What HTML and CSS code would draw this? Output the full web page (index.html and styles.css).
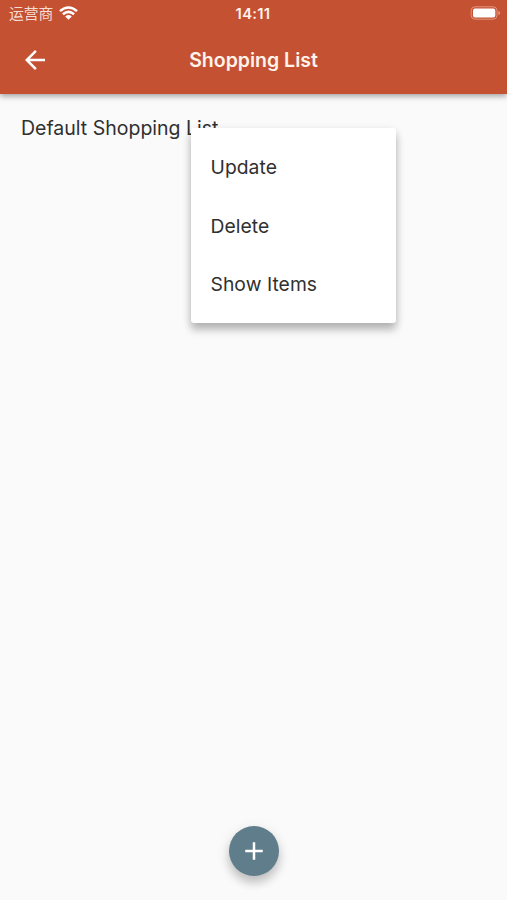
FILE: index.html
```html
<!DOCTYPE html>
<html lang="en">
<head>
<meta charset="utf-8">
<title>Shopping List</title>
<link rel="stylesheet" href="styles.css">
</head>
<body>
<div class="screen">
  <header class="header">
    <div class="status">
      <div class="carrier"><span lang="zh">运营商</span>
        <svg class="wifi" width="19" height="14" viewBox="0 0 19 14" fill="none" stroke="#fff"><path d="M1 5.1Q9.5-2.2 18 5.1M3.9 8.3Q9.5 3.5 15.1 8.3" stroke-width="2.5"/><path d="M6.2 10.4Q9.5 7.8 12.8 10.4L9.5 13.8Z" fill="#fff" stroke="none"/></svg>
      </div>
      <span class="time">14:11</span>
      <svg class="battery" width="31" height="14" viewBox="0 0 31 14"><rect x="1.2" y=".8" width="25.8" height="12.4" rx="3.8" fill="none" stroke="#e3957c"/><rect x="3" y="2.5" width="22.3" height="9" rx="2" fill="#fff"/><path d="M28.3 4.8Q30.2 5.5 30.2 7T28.3 9.2Z" fill="#e3957c"/></svg>
    </div>
    <div class="bar">
      <svg class="back" width="30" height="30" viewBox="0 0 24 24" fill="#fff"><path d="M20 11H7.83l5.59-5.59L12 4l-8 8 8 8 1.41-1.41L7.83 13H20v-2z"/></svg>
      <h1 class="title">Shopping List</h1>
    </div>
  </header>
  <main class="content">
    <div class="row">Default Shopping List</div>
  </main>
  <div class="menu">
    <div class="item">Update</div>
    <div class="item">Delete</div>
    <div class="item">Show Items</div>
  </div>
  <div class="fab"><svg width="30" height="30" viewBox="0 0 24 24" fill="#fff"><path d="M19 13h-6v6h-2v-6H5v-2h6V5h2v6h6v2z"/></svg></div>
</div>
</body>
</html>
```

FILE: styles.css
```css
body { margin: 0; font-family: Inter, sans-serif; color: #303030; }
.screen { position: relative; height: 900px; background: #fafafa; overflow: hidden; display: flex; flex-direction: column; }
.header { height: 94px; background: #c55133; color: #fff3ea; box-shadow: 0 2px 6px rgba(0,0,0,.38); }
.status { height: 27px; display: grid; grid-template-columns: 1fr auto 1fr; align-items: center; padding: 0 6px 0 7px; }
.carrier { display: flex; align-items: center; gap: 6px; padding-left: 2px; font: 15px/20px "Noto Sans CJK SC", sans-serif; color: #f5ddd4; }
.carrier span { font-size: 14.8px; margin-top: -1px; }
.wifi { margin-top: -1px; }
.time { font-size: 14.8px; font-weight: 600; letter-spacing: .3px; margin-left: -2px; }
.battery { justify-self: end; margin-top: -1px; }
.bar { height: 66px; display: grid; grid-template-columns: 71px 1fr 71px; align-items: center; }
.back { margin-left: 20px; }
.title { margin: 0; text-align: center; font-size: 19.5px; font-weight: 600; line-height: 28px; }
.content { flex: 1; padding: 20px 21px; }
.row { font-size: 19.5px; line-height: 28px; }
.menu { position: absolute; left: 191px; top: 128px; width: 205px; height: 195px; box-sizing: border-box; padding: 10px 0; background: #fff; border-radius: 3px; box-shadow: 0 7px 8px rgba(0,0,0,.22), 0 3px 10px rgba(0,0,0,.12); }
.item { height: 58.5px; line-height: 59px; padding-left: 19.5px; font-size: 19.3px; letter-spacing: .05px; }
.fab { position: absolute; left: 229px; top: 826px; width: 50px; height: 50px; border-radius: 50%; background: #607d8b; display: flex; align-items: center; justify-content: center; box-shadow: 0 7px 10px rgba(0,0,0,.18), 0 3px 14px rgba(0,0,0,.1); }
```
